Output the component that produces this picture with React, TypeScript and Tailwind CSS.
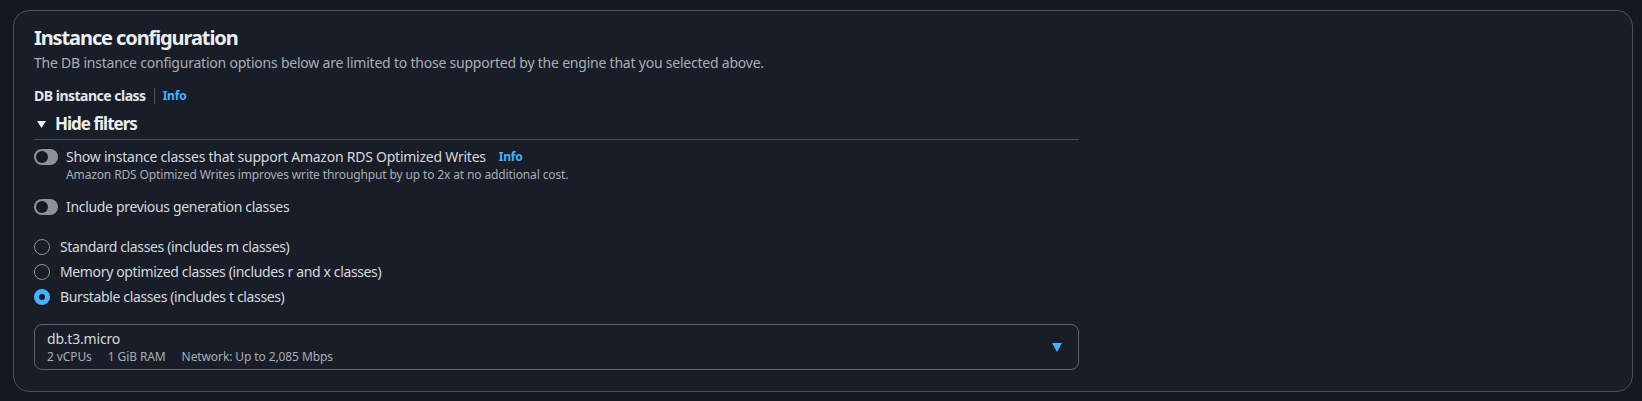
import React from 'react';

const font = { fontFamily: '"Noto Sans", "Open Sans", Arial, sans-serif' };

function Info({ className = '' }: { className?: string }) {
  return <span className={`text-[12px] font-bold leading-4 tracking-[-0.2px] text-[#42b4ff] ${className}`}>Info</span>;
}

function Toggle() {
  return (
    <span className="relative flex h-[16px] w-[24px] shrink-0 rounded-full bg-[#8c929b]">
      <span className="absolute left-[2px] top-[2px] h-[12px] w-[12px] rounded-full bg-[#161b23]" />
    </span>
  );
}

function Radio({ checked, label }: { checked?: boolean; label: string }) {
  return (
    <label className="flex h-[24px] items-center gap-[10px]">
      {checked ? (
        <span className="h-4 w-4 shrink-0 rounded-full border-[5px] border-[#42b4ff] bg-[#161b23]" />
      ) : (
        <span className="h-4 w-4 shrink-0 rounded-full border-[1.5px] border-[#8c929b]" />
      )}
      <span className="text-[14px] leading-5 tracking-[-0.36px] text-[#d5d9de]">{label}</span>
    </label>
  );
}

export default function App() {
  return (
    <div className="h-[401px] w-full overflow-hidden bg-[#141820] pt-[10px] pl-[13px]" style={font}>
      <section className="h-[382px] w-[1620px] rounded-[16px] border border-[#4b505c] bg-[#181d27] px-[20px] pt-[15px]">
        {/* ── Header ── */}
        <h2 className="text-[20px] font-bold leading-6 tracking-[-1.1px] text-[#eceef0]">Instance configuration</h2>
        <p className="mt-[3px] text-[14px] leading-5 tracking-[-0.22px] text-[#a8aeb7]">
          The DB instance configuration options below are limited to those supported by the engine that you selected above.
        </p>

        <div className="mt-[13px] flex h-5 items-center">
          <span className="text-[14px] font-bold leading-5 tracking-[-0.5px] text-[#e2e5e9]">DB instance class</span>
          <span className="mx-[8px] h-[16px] w-px bg-[#4b505c]" />
          <Info />
        </div>

        <div className="w-[1045px]">
          {/* ── Filters ── */}
          <div className="mt-[6px] flex items-center gap-[9px] border-b border-[#454b57] pb-[3px] pl-[3px]">
            <svg width="9" height="7" viewBox="0 0 9 7" className="shrink-0">
              <path d="M0 0h9L4.5 7z" fill="#eceef0" />
            </svg>
            <span className="text-[17px] font-bold leading-6 tracking-[-1px] text-[#eceef0]">Hide filters</span>
          </div>

          <div className="mt-[7px] flex gap-2">
            <div className="flex h-5 items-center">
              <Toggle />
            </div>
            <div>
              <div className="flex items-center gap-[13px]">
                <span className="text-[14px] leading-5 tracking-[-0.24px] text-[#d5d9de]">
                  Show instance classes that support Amazon RDS Optimized Writes
                </span>
                <Info />
              </div>
              <p className="text-[12px] leading-4 tracking-[-0.13px] text-[#a8aeb7]">
                Amazon RDS Optimized Writes improves write throughput by up to 2x at no additional cost.
              </p>
            </div>
          </div>

          <div className="mt-[14px] flex items-center gap-2">
            <Toggle />
            <span className="text-[14px] leading-5 tracking-[-0.32px] text-[#d5d9de]">Include previous generation classes</span>
          </div>

          <div className="mt-[18px] flex flex-col gap-[1px]">
            <Radio label="Standard classes (includes m classes)" />
            <Radio label="Memory optimized classes (includes r and x classes)" />
            <Radio checked label="Burstable classes (includes t classes)" />
          </div>

          {/* ── Instance select ── */}
          <div className="mt-[15px] flex h-[46px] items-center rounded-[8px] border border-[#5c6370] pl-[12px] pr-[16px]">
            <div className="flex-1">
              <div className="text-[14px] leading-5 tracking-[-0.2px] text-[#d5d9de]">db.t3.micro</div>
              <div className="flex gap-4 text-[12px] leading-4 tracking-[-0.1px] text-[#a8aeb7]">
                <span>2 vCPUs</span>
                <span>1 GiB RAM</span>
                <span>Network: Up to 2,085 Mbps</span>
              </div>
            </div>
            <svg width="10" height="9" viewBox="0 0 10 9" className="shrink-0">
              <path d="M0 0h10L5 9z" fill="#42b4ff" />
            </svg>
          </div>
        </div>
      </section>
    </div>
  );
}
